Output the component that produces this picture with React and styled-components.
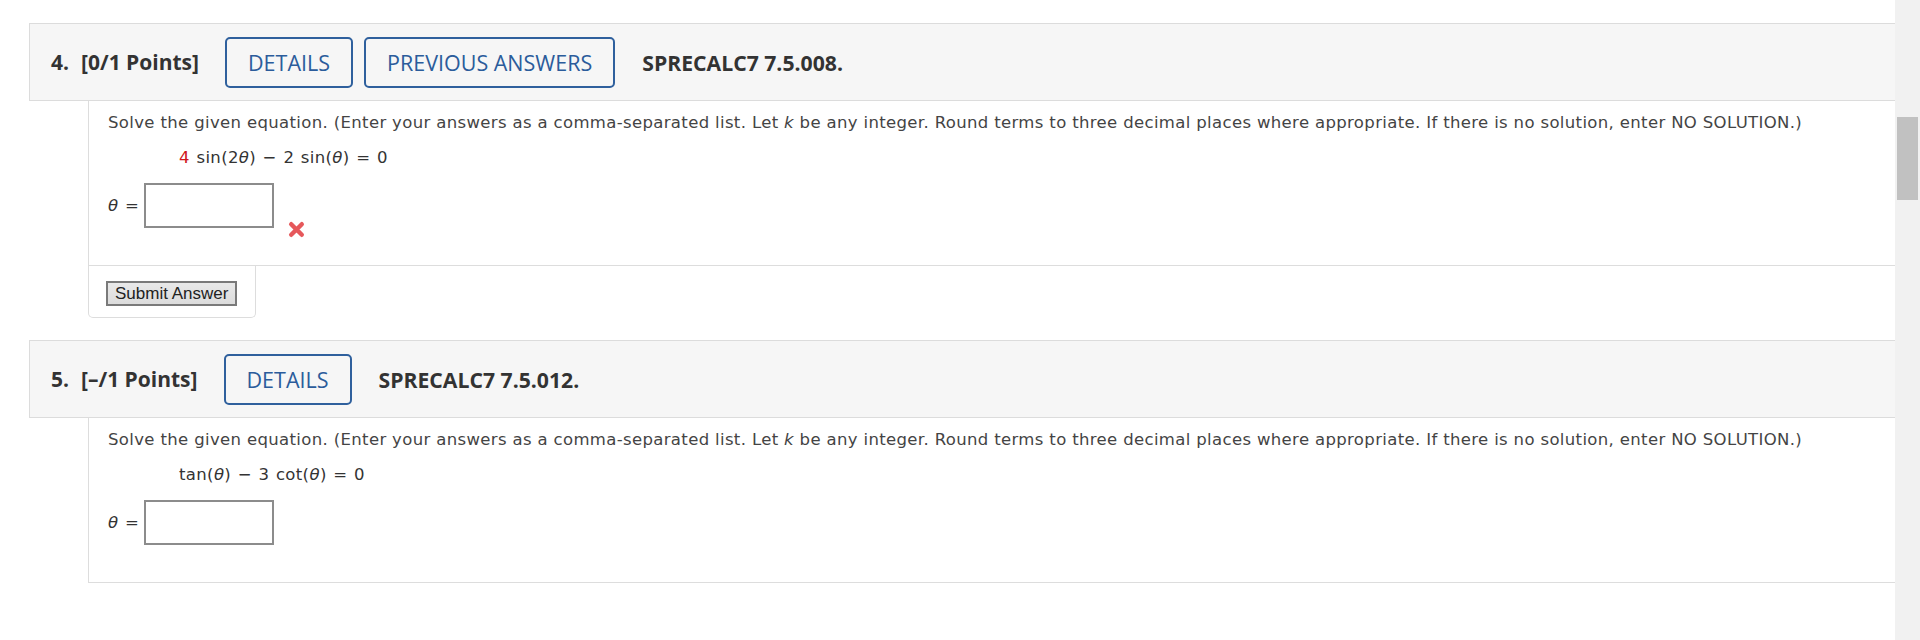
import React from 'react'
import styled, {createGlobalStyle} from 'styled-components';

const GlobalStyle = createGlobalStyle`
  html, body {
    margin: 0;
    padding: 0;
    background: #ffffff;
    overflow: hidden;
  }
`;

const Page = styled.div`
  display: flex;
  width: 1920px;
  height: 640px;
`;

const Main = styled.div`
  flex: 1;
  padding: 23px 0 0 29px;
  display: flex;
  flex-direction: column;
`;

const Rail = styled.div`
  width: 25px;
  background: #f1f1f1;
  padding: 117px 2px 0 2px;
  box-sizing: border-box;
`;

const Thumb = styled.div`
  height: 83px;
  background: #c1c1c1;
`;

const Question = styled.div`
  display: flex;
  flex-direction: column;
  margin-bottom: 22px;
`;

const Header = styled.div`
  height: 78px;
  box-sizing: border-box;
  display: flex;
  align-items: center;
  padding-left: 21px;
  background: #f6f6f6;
  border: 1px solid #dcdcdc;
  border-right: none;
  font-family: "Open Sans", "Noto Sans", sans-serif;
  color: #333333;
`;

const Num = styled.span`
  font-size: 21px;
  font-weight: 700;
  margin-right: 12px;
`;

const Points = styled.span`
  font-size: 21px;
  font-weight: 700;
  margin-right: 26px;
`;

const HeadButton = styled.button`
  height: 51px;
  padding: 0 21px;
  margin-right: ${p => p.last ? '27px' : '11px'};
  background: transparent;
  border: 2px solid #2f609d;
  border-radius: 5px;
  color: #2b5c9b;
  font-family: "Open Sans", "Noto Sans", sans-serif;
  font-size: 21.5px;
  font-weight: 400;
  cursor: pointer;
`;

const Code = styled.span`
  font-size: 21.2px;
  font-weight: 700;
`;

const Body = styled.div`
  margin-left: 59px;
  border-left: 1px solid #dddddd;
  border-bottom: 1px solid #dddddd;
  padding: 10px 20px 37px 19px;
  font-family: "DejaVu Sans", Verdana, sans-serif;
  font-size: 16.5px;
  letter-spacing: 0.35px;
  line-height: 24px;
  color: #444444;
`;

const Prompt = styled.div``;

const Equation = styled.div`
  margin: 11px 0 0 71px;
  color: #333333;
  word-spacing: 1px;
`;

const Red = styled.span`
  color: #d0161c;
`;

const AnswerRow = styled.div`
  margin-top: 13px;
  display: flex;
  align-items: center;
`;

const Label = styled.span`
  color: #333333;
  margin-right: 5px;
  word-spacing: 1px;
`;

const AnswerInput = styled.input`
  width: 130px;
  height: 45px;
  box-sizing: border-box;
  border: 2px solid #8c8c8c;
  background: #ffffff;
  outline: none;
`;

const Wrong = styled.span`
  align-self: flex-end;
  margin: 0 0 -10px 14px;
  display: flex;
  height: 17px;
`;

const SubmitBox = styled.div`
  margin-left: 59px;
  width: 168px;
  box-sizing: border-box;
  border: 1px solid #dddddd;
  border-top: none;
  border-radius: 0 0 5px 5px;
  padding: 15px 0 11px 17px;
`;

const SubmitButton = styled.button`
  height: 25px;
  padding: 0 7px;
  font-family: "Liberation Sans", Arial, sans-serif;
  font-size: 17px;
  color: #222222;
  background: linear-gradient(#e9e9e9, #dcdcdc);
  border: 2px solid #7a7a7a;
  border-radius: 0;
  cursor: pointer;
`;

const Theta = () => <i>θ</i>;

const Cross = () => (
  <svg width="17" height="17" viewBox="0 0 17 17">
    <path d="M3.2 3.2 L13.8 13.8 M13.8 3.2 L3.2 13.8" stroke="#e6585b" strokeWidth="4.4" strokeLinecap="round" />
  </svg>
);

const PromptText = () => (
  <Prompt>
    Solve the given equation. (Enter your answers as a comma-separated list. Let <i>k</i> be any integer. Round terms to three decimal places where appropriate. If there is no solution, enter NO SOLUTION.)
  </Prompt>
);

const App = () => {
  return (
    <Page>
      <GlobalStyle />
      <Main>
        <Question>
          <Header>
            <Num>4.</Num>
            <Points>[0/1 Points]</Points>
            <HeadButton>DETAILS</HeadButton>
            <HeadButton last>PREVIOUS ANSWERS</HeadButton>
            <Code>SPRECALC7 7.5.008.</Code>
          </Header>
          <Body>
            <PromptText />
            <Equation>
              <Red>4</Red> sin(2<Theta />) − 2 sin(<Theta />) = 0
            </Equation>
            <AnswerRow>
              <Label><Theta /> =</Label>
              <AnswerInput type="text" />
              <Wrong><Cross /></Wrong>
            </AnswerRow>
          </Body>
          <SubmitBox>
            <SubmitButton>Submit Answer</SubmitButton>
          </SubmitBox>
        </Question>
        <Question>
          <Header>
            <Num>5.</Num>
            <Points>[–/1 Points]</Points>
            <HeadButton last>DETAILS</HeadButton>
            <Code>SPRECALC7 7.5.012.</Code>
          </Header>
          <Body>
            <PromptText />
            <Equation>
              tan(<Theta />) − 3 cot(<Theta />) = 0
            </Equation>
            <AnswerRow>
              <Label><Theta /> =</Label>
              <AnswerInput type="text" />
            </AnswerRow>
          </Body>
        </Question>
      </Main>
      <Rail>
        <Thumb />
      </Rail>
    </Page>
  )
}

export default App
